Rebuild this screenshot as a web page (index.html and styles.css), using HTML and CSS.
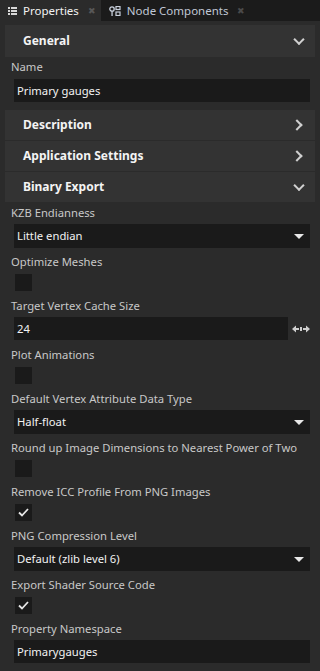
FILE: index.html
```html
<!DOCTYPE html>
<html lang="en">
<head>
<meta charset="UTF-8" />
<meta name="viewport" content="width=device-width, initial-scale=1" />
<title>Properties</title>
<link rel="stylesheet" href="styles.css">
</head>
<body>

<div class="tabs">
  <div class="tab active">
    <svg class="tab-icon" width="9" height="8" viewBox="0 0 9 8">
      <rect x="0" y="0" width="2" height="2" fill="#d8d8d8"/><rect x="3" y="0" width="6" height="2" fill="#d8d8d8"/>
      <rect x="0" y="3" width="2" height="2" fill="#d8d8d8"/><rect x="3" y="3" width="6" height="2" fill="#d8d8d8"/>
      <rect x="0" y="6" width="2" height="2" fill="#d8d8d8"/><rect x="3" y="6" width="6" height="2" fill="#d8d8d8"/>
    </svg>
    <span>Properties</span>
    <span class="close">&#x2716;</span>
  </div>
  <div class="tab">
    <svg class="tab-icon" width="12" height="10" viewBox="0 0 12 10">
      <circle cx="3" cy="3" r="2.2" fill="none" stroke="#c8d0dc" stroke-width="1.3"/>
      <rect x="2.4" y="5" width="1.3" height="5" fill="#c8d0dc"/>
      <rect x="7" y="0.5" width="4" height="3" fill="none" stroke="#c8d0dc" stroke-width="1.2"/>
      <rect x="7" y="6" width="4" height="3.5" fill="none" stroke="#c8d0dc" stroke-width="1.2"/>
    </svg>
    <span>Node Components</span>
    <span class="close">&#x2716;</span>
  </div>
</div>

<div class="panel">
  <div class="group-head first">General <span class="chev down"></span></div>
  <div class="prop">
    <div class="label">Name</div>
    <div class="field">Primary gauges</div>
  </div>

  <div class="group-head">Description <span class="chev"></span></div>
  <div class="group-head">Application Settings <span class="chev"></span></div>
  <div class="group-head">Binary Export <span class="chev down"></span></div>

  <div class="props">
    <div class="prop sel">
      <div class="label">KZB Endianness</div>
      <div class="select">Little endian<span class="arrow"></span></div>
    </div>
    <div class="prop">
      <div class="label">Optimize Meshes</div>
      <div class="check"></div>
    </div>
    <div class="prop">
      <div class="label">Target Vertex Cache Size</div>
      <div class="row">
        <div class="field grow">24</div>
        <svg class="drag" width="18" height="8" viewBox="0 0 18 8">
          <path d="M0 4 L4 0.5 L4 7.5 Z M18 4 L14 0.5 L14 7.5 Z" fill="#cfcfcf"/>
          <rect x="4" y="3" width="3" height="2" fill="#cfcfcf"/>
          <rect x="11" y="3" width="3" height="2" fill="#cfcfcf"/>
          <rect x="8" y="2" width="2" height="4" fill="#cfcfcf"/>
        </svg>
      </div>
    </div>
    <div class="prop">
      <div class="label">Plot Animations</div>
      <div class="check"></div>
    </div>
    <div class="prop sel">
      <div class="label">Default Vertex Attribute Data Type</div>
      <div class="select">Half-float<span class="arrow"></span></div>
    </div>
    <div class="prop">
      <div class="label">Round up Image Dimensions to Nearest Power of Two</div>
      <div class="check"></div>
    </div>
    <div class="prop">
      <div class="label">Remove ICC Profile From PNG Images</div>
      <div class="check on"><svg width="11" height="9" viewBox="0 0 11 9"><path d="M1 4.5 L4 7.5 L10 1" fill="none" stroke="#e6e6e6" stroke-width="1.8"/></svg></div>
    </div>
    <div class="prop sel">
      <div class="label">PNG Compression Level</div>
      <div class="select">Default (zlib level 6)<span class="arrow"></span></div>
    </div>
    <div class="prop">
      <div class="label">Export Shader Source Code</div>
      <div class="check on"><svg width="11" height="9" viewBox="0 0 11 9"><path d="M1 4.5 L4 7.5 L10 1" fill="none" stroke="#e6e6e6" stroke-width="1.8"/></svg></div>
    </div>
    <div class="prop">
      <div class="label">Property Namespace</div>
      <div class="field">Primarygauges</div>
    </div>
  </div>
</div>

</body>
</html>
```

FILE: styles.css
```css
body {
  margin: 0;
  background: #2b2b2b;
  font-family: 'Noto Sans', 'Open Sans', sans-serif;
  font-size: 11.25px;
  color: #c8c8c8;
  width: 320px;
  height: 671px;
  overflow: hidden;
}
.tabs {
  display: flex;
  height: 21px;
  background: #1b1b1b;
}
.tab {
  display: flex;
  align-items: center;
  padding: 0 5px 0 8px;
  color: #c0c8d6;
  font-size: 11.5px;
  white-space: nowrap;
}
.tab-icon {
  flex-shrink: 0;
  margin-right: 6px;
}
.tab.active {
  background: #2b2b2b;
  color: #f2f2f2;
}
.tab .close {
  color: #4a4a4a;
  font-size: 9px;
  margin-left: 9px;
}
.tab.active .close {
  color: #575757;
}
.panel {
  padding: 4px 5px 0;
}
.group-head {
  position: relative;
  height: 30px;
  line-height: 30px;
  background: #333333;
  color: #f4f4f4;
  font-weight: 700;
  font-size: 12px;
  padding-left: 18px;
  margin-bottom: 1px;
}
.group-head.first {
  height: 32px;
  line-height: 32px;
  margin-bottom: 0;
}
.chev {
  position: absolute;
  right: 14px;
  top: 50%;
  width: 6px;
  height: 6px;
  border-right: 2.5px solid #d0d0d0;
  border-bottom: 2.5px solid #d0d0d0;
  transform: translateY(-50%) rotate(-45deg);
}
.chev.down {
  right: 12px;
  transform: translateY(-70%) rotate(45deg);
}
.prop {
  padding: 0 5px 5px 6px;
}
.prop.sel {
  padding-bottom: 4px;
}
.label {
  height: 20px;
  line-height: 20px;
  white-space: nowrap;
}
.field, .select {
  margin: 1px 0 0 3px;
  height: 23px;
  line-height: 23px;
  background: #1a1a1a;
  color: #f2f2f2;
  padding-left: 3px;
}
.select {
  position: relative;
  height: 24px;
  line-height: 24px;
}
.arrow {
  position: absolute;
  right: 6px;
  top: 10px;
  border-left: 5px solid transparent;
  border-right: 5px solid transparent;
  border-top: 5px solid #e8e8e8;
}
.props .prop:first-child .label {
  margin-top: 1px;
}
.panel > .prop {
  padding-bottom: 8px;
}
.panel > .prop .field {
  margin-top: 2px;
}
.row {
  display: flex;
  align-items: center;
  margin-right: -5px;
}
.grow {
  flex: 1;
}
.drag {
  margin: 1px 5px 0 4px;
}
.check {
  margin: 2px 0 0 4px;
  width: 17px;
  height: 17px;
  background: #1a1a1a;
  display: flex;
  align-items: center;
  justify-content: center;
}
```
